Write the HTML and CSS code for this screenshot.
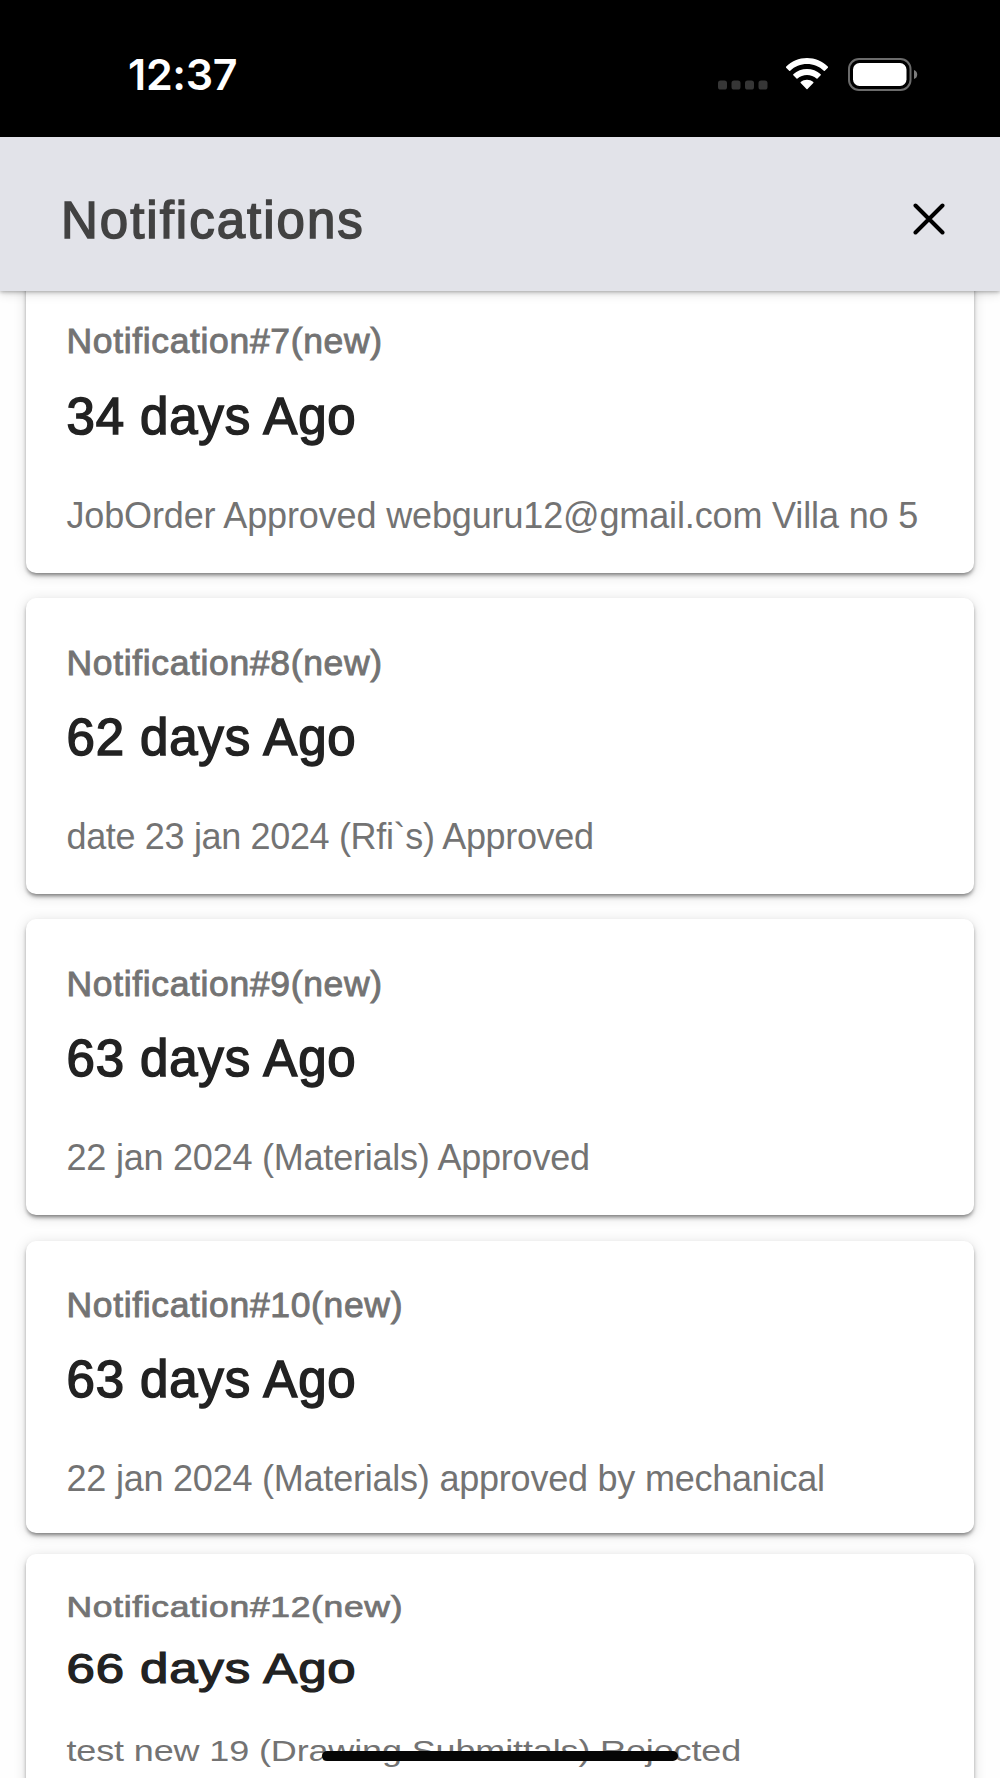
FILE: index.html
```html
<!DOCTYPE html>
<html lang="en">
<head>
<meta charset="utf-8">
<title>Notifications</title>
<link rel="stylesheet" href="styles.css">
</head>
<body>
<div class="screen">
  <div class="status-bar">
    <span class="clock">12:37</span>
    <div class="status-icons">
      <svg class="signal" width="50" height="10" viewBox="0 0 50 10" fill="#363636"><rect width="9" height="9" rx="2.6" y=".5"/><rect x="13.5" width="9" height="9" rx="2.6" y=".5"/><rect x="27" width="9" height="9" rx="2.6" y=".5"/><rect x="40.5" width="9" height="9" rx="2.6" y=".5"/></svg>
      <svg class="wifi" width="42" height="32" viewBox="0 0 42 32" fill="#fff"><path d="M21 0C13 0 5.600 3.100 0 8.700Q-.3 9.200.1 9.700L3.200 12.800Q3.700 13.200 4.200 12.800C8.700 8.400 14.600 6.100 21 6.100S33.300 8.400 37.800 12.800Q38.300 13.200 38.800 12.800L41.900 9.700Q42.300 9.200 42 8.700C36.400 3.100 29 0 21 0Z"/><path d="M21 11C15.900 11 11.100 12.900 7.300 16.300Q6.900 16.800 7.300 17.300L10.500 20.500Q11 20.900 11.500 20.500C14.100 18.200 17.500 16.900 21 16.900S27.900 18.200 30.500 20.500Q31 20.900 31.500 20.500L34.700 17.300Q35.100 16.800 34.700 16.300C30.900 12.900 26.100 11 21 11Z"/><path d="M21 21.800C18.700 21.800 16.500 22.600 14.700 24Q14.200 24.500 14.700 25L20.500 31Q21 31.500 21.500 31L27.300 25Q27.800 24.500 27.300 24C25.500 22.600 23.300 21.800 21 21.800Z"/></svg>
      <svg class="battery" width="70" height="34" viewBox="0 0 70 34"><rect x="1" y="1" width="61.500" height="31" rx="10" fill="none" stroke="#6b6b6b" stroke-width="2"/><rect x="5" y="5" width="53.500" height="23" rx="6.500" fill="#fff"/><path d="M66 12Q69.200 13 69.200 16.500T66 21Z" fill="#7c7c7c"/></svg>
    </div>
  </div>
  <header class="header">
    <h1 class="header-title">Notifications</h1>
    <svg class="close" width="32" height="32" viewBox="0 0 32 32" fill="none" stroke="#000" stroke-width="4" stroke-linecap="round"><path d="M2.500 2.500 29.500 29.500M29.500 2.500 2.500 29.500"/></svg>
  </header>
  <main class="list">
    <article class="card"><div class="content">
      <p class="label">Notification#7(new)</p>
      <h2 class="age">34 days Ago</h2>
      <p class="message wide">JobOrder Approved webguru12@gmail.com Villa no 5</p>
    </div></article>
    <article class="card"><div class="content">
      <p class="label">Notification#8(new)</p>
      <h2 class="age">62 days Ago</h2>
      <p class="message tight">date 23 jan 2024 (Rfi`s) Approved</p>
    </div></article>
    <article class="card"><div class="content">
      <p class="label">Notification#9(new)</p>
      <h2 class="age">63 days Ago</h2>
      <p class="message">22 jan 2024 (Materials) Approved</p>
    </div></article>
    <article class="card short"><div class="content">
      <p class="label">Notification#10(new)</p>
      <h2 class="age">63 days Ago</h2>
      <p class="message">22 jan 2024 (Materials) approved by mechanical</p>
    </div></article>
    <article class="card last"><div class="content">
      <p class="label">Notification#12(new)</p>
      <h2 class="age">66 days Ago</h2>
      <p class="message wide">test new 19 (Drawing Submittals) Rejected</p>
    </div></article>
  </main>
  <div class="home-indicator"></div>
</div>
</body>
</html>
```
FILE: styles.css
```css
* { box-sizing: border-box; }

body {
  margin: 0;
  background: #fefefe;
  font-family: "Liberation Sans", Arial, sans-serif;
}

h1, h2, p { margin: 0; font-weight: 400; white-space: nowrap; }
svg { display: block; flex: none; }

.screen {
  position: relative;
  width: 1000px;
  height: 1778px;
  overflow: hidden;
}

.status-bar {
  display: flex;
  justify-content: space-between;
  height: 137px;
  padding: 0 82px 0 128px;
  background: #000;
}

.clock {
  padding-top: 48px;
  color: #fff;
  font: 600 43px/52px Inter, sans-serif;
  letter-spacing: -0.3px;
}

.status-icons { display: flex; align-items: flex-start; padding-top: 57.5px; }
.signal { margin: 22.5px 18px 0 0; }
.wifi { margin: .5px 20px 0 0; }

.header {
  position: relative;
  z-index: 1;
  display: flex;
  align-items: center;
  justify-content: space-between;
  height: 154px;
  padding: 10px 55.5px 0 61px;
  background: #e2e3e9;
  box-shadow: 0 1px 4px rgba(0, 0, 0, .3), 0 3px 10px rgba(0, 0, 0, .12);
}

.header-title {
  padding-top: 3px;
  color: #424242;
  font-size: 51px;
  line-height: 60px;
  letter-spacing: 2px;
  -webkit-text-stroke: 1.5px #424242;
}

.list {
  display: flex;
  flex-direction: column;
  gap: 25.3px;
  margin-top: -14.3px;
  padding: 0 26px 0 25.5px;
}

.card {
  flex: none;
  height: 296px;
  border-radius: 10px;
  background: #fff;
  box-shadow: 0 3px 4px -1px rgba(0, 0, 0, .5), 0 2px 14px rgba(0, 0, 0, .13);
}

.content {
  display: flex;
  flex-direction: column;
  padding: 42.500px 0 0 41px;
}

.label {
  color: #737373;
  font-size: 35.5px;
  line-height: 44px;
  letter-spacing: .65px;
  -webkit-text-stroke: .9px #737373;
}

.age {
  margin-top: 23.400px;
  color: #222;
  font-size: 51px;
  line-height: 60px;
  letter-spacing: .85px;
  -webkit-text-stroke: 1.5px #222;
}

.message {
  margin-top: 47px;
  color: #737373;
  font-size: 36px;
  line-height: 44px;
  letter-spacing: -.22px;
}

.wide { letter-spacing: -.14px; }
.tight { letter-spacing: -.34px; }

.short { height: 292px; }
.last { margin-top: -4px; height: 260px; }
.last .content { transform: scaleY(.823); transform-origin: 0 0; }

.home-indicator {
  position: absolute;
  z-index: 2;
  left: 322px;
  top: 1751px;
  width: 356px;
  height: 10px;
  border-radius: 5px;
  background: #050505;
}
```
